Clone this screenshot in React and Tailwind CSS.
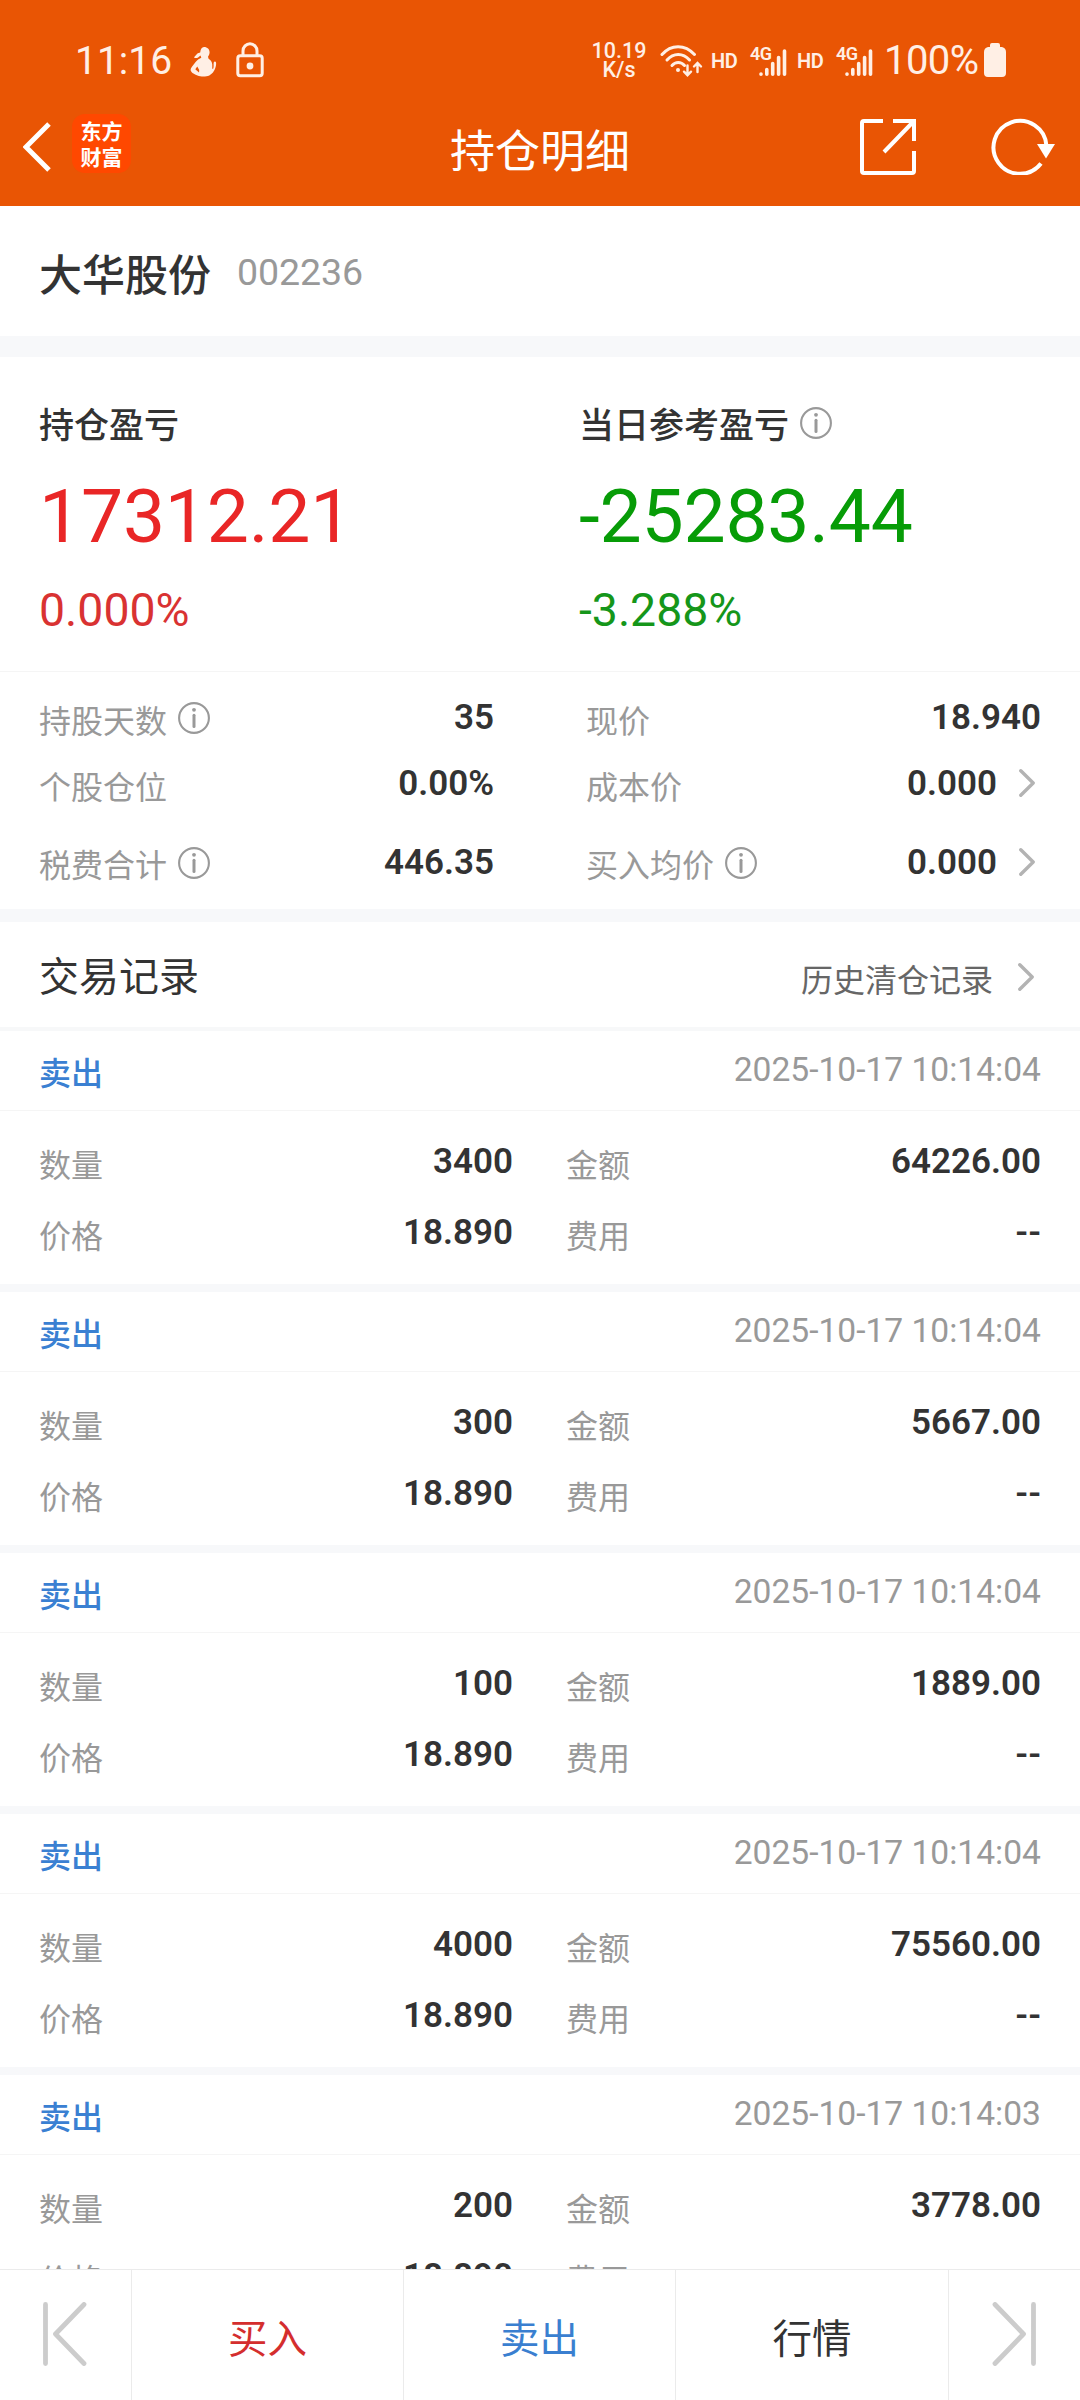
import React from "react";

const trades = [
  { id: 1, time: "2025-10-17 10:14:04", qty: "3400", price: "18.890", amount: "64226.00", fee: "--" },
  { id: 2, time: "2025-10-17 10:14:04", qty: "300", price: "18.890", amount: "5667.00", fee: "--" },
  { id: 3, time: "2025-10-17 10:14:04", qty: "100", price: "18.890", amount: "1889.00", fee: "--" },
  { id: 4, time: "2025-10-17 10:14:04", qty: "4000", price: "18.890", amount: "75560.00", fee: "--" },
  { id: 5, time: "2025-10-17 10:14:03", qty: "200", price: "18.890", amount: "3778.00", fee: "--" },
];

function InfoIcon({ className = "" }) {
  return (
    <svg width="32" height="32" viewBox="0 0 32 32" fill="none" className={className}>
      <circle cx="16" cy="16" r="14.9" stroke="#999" strokeWidth="2.1" />
      <circle cx="16" cy="7.8" r="1.9" fill="#999" />
      <path d="M16 13.2V24.6" stroke="#999" strokeWidth="3" strokeLinecap="round" />
    </svg>
  );
}

function Chevron({ className = "" }) {
  return (
    <svg width="16" height="28" viewBox="0 0 16 28" fill="none" className={className}>
      <path d="M1.8 1.8L14.2 14L1.8 26.2" stroke="#b3b3b3" strokeWidth="3.4" strokeLinecap="round" strokeLinejoin="round" />
    </svg>
  );
}

function Signal() {
  return (
    <div className="relative h-[34px] w-[37px]">
      <span className="absolute left-0 top-[2px] text-[18px] font-semibold leading-[18px] tracking-[-0.5px]">4G</span>
      <svg width="37" height="34" viewBox="0 0 37 34" className="absolute left-0 top-0" stroke="currentColor" strokeWidth="3.6" strokeLinecap="round">
        <path d="M11 31V31.2M16.8 26.5V31.2M22.7 20.5V31.2M28.6 14.5V31.2M34.5 8V31.2" />
      </svg>
    </div>
  );
}

function StatusBar() {
  return (
    <div className="flex h-[120px] items-center pl-[75px] pr-[74px] text-[#ffefe5]">
      <span className="w-[115px] pt-[2px] text-[39px] leading-[40px]">11:16</span>

      {/* Notification icons */}
      <svg width="27" height="31" viewBox="0 0 27 31" fill="currentColor" className="mt-[3px]">
        <path d="M14 1c3.400 0 5.600 2.300 5.600 5.300 0 1.800-.8 3.400-1.600 4.500l.6 2c3 1.700 4 4.500 3.700 7.800-.1 1.500 0 2.500.5 2.400.8-.2.900-2.600.8-4.700-.1-1.500.3-2.700 1.300-2.700 1.200 0 1.500 1.600 1.100 3.700-.7 4-2.700 8.200-6.700 10.200-3.500 1.500-8.600 1.400-11.800 0-3.100-1.300-6.900-3-6.900-5.700 0-1.700 2.500-4.500 4.800-7.500 1.200-1.500 2.400-3 4.500-3.900l1.400-.6-.8-2.400c-1.200 1-2.600 2.600-5 2.700-1.200 0-1.800-.7-.8-1.700 1-.9 1.800-1.600 2.500-2.600.7-.9 2-1 3-1.400C10.500 3.200 11.800 1 14 1Z" />
        <path d="M7.300 20.500L5.300 23.300L9 26.500L9.200 24Z" fill="#e95504" />
      </svg>
      <svg width="28" height="36" viewBox="0 0 28 36" fill="none" className="ml-[19px]">
        <rect x="1.800" y="13.800" width="24.400" height="20" rx="2.500" stroke="currentColor" strokeWidth="3" />
        <path d="M7 13.500V9A7 7.200 0 0 1 21 9V13.500" stroke="currentColor" strokeWidth="3" />
        <circle cx="14" cy="24" r="3.400" fill="currentColor" />
      </svg>

      <div className="ml-auto flex items-center">
        <div className="w-[56px] text-center text-[21.500px] font-medium leading-[19px]">
          <p>10.19</p>
          <p>K/s</p>
        </div>
        <svg width="43" height="34" viewBox="0 0 43 34" fill="none" stroke="currentColor" strokeWidth="3" strokeLinecap="round" className="ml-[13px]">
          <path d="M2 11.500C11 1 25 1 34.500 11.500" />
          <path d="M7 17C13.500 9.500 23 9.500 29.500 17" />
          <path d="M12 22.500C15.500 18.500 21 18.500 24.500 22.500" />
          <circle cx="18" cy="27" r="2" fill="currentColor" stroke="none" />
          <path d="M27.500 22.500V32M24 28.700L27.500 32.200L31 28.700" strokeWidth="2.400" />
          <path d="M37.500 29V20.500M34 23.500L37.500 20L41 23.500" strokeWidth="2.400" />
        </svg>
        <span className="ml-[8px] w-[27px] pt-px text-[20px] font-semibold leading-[20px] tracking-[-0.5px]">HD</span>
        <div className="ml-[12px]"><Signal /></div>
        <span className="ml-[10px] w-[27px] pt-px text-[20px] font-semibold leading-[20px] tracking-[-0.5px]">HD</span>
        <div className="ml-[12px]"><Signal /></div>
        <span className="ml-[11px] w-[99px] pt-[2px] text-[40px] leading-[40px] tracking-[-0.6px]">100%</span>
        <svg width="22" height="34" viewBox="0 0 22 34" fill="currentColor" className="ml-[1px]">
          <path d="M8 0H14Q16 0 16 2V4H18Q22 5 22 9V30Q22 34 18 34H4Q0 34 0 30V9Q0 5 4 4H6V2Q6 0 8 0Z" />
        </svg>
      </div>
    </div>
  );
}

function NavBar() {
  return (
    <div className="grid h-[86px] grid-cols-[1fr_auto_1fr] items-start text-white">
      <div className="flex items-center pl-[23px]">
        <svg width="28" height="50" viewBox="0 0 28 50" fill="none">
          <path d="M26 2L3 25L26 48" stroke="currentColor" strokeWidth="5" />
        </svg>
        <div className="-mt-[6px] ml-[21px] flex h-[59px] w-[59px] flex-col items-center justify-center rounded-[13px] bg-[#ff4800] pb-px font-['Noto_Sans_CJK_SC',sans-serif] text-[21px] font-bold leading-[26px]">
          <span>东方</span>
          <span>财富</span>
        </div>
      </div>
      <h1 className="pt-[8px] text-[45px] leading-[50px]">持仓明细</h1>
      <div className="flex justify-end pr-[25px]">
        <svg width="58" height="58" viewBox="0 0 58 58" fill="none" stroke="currentColor" strokeWidth="4" className="-mt-[2px]">
          <path d="M24 3H5Q3 3 3 5V53Q3 55 5 55H53Q55 55 55 53V33" />
          <path d="M34 3H55V23M55 3L25 34" />
        </svg>
        <svg width="64" height="58" viewBox="0 0 64 58" fill="none" className="-mt-[3px] ml-[74px]">
          <path d="M50 46.500A26.500 26.500 0 1 1 55.500 29" stroke="currentColor" strokeWidth="4" />
          <path d="M46 27H64L55 41.500Z" fill="currentColor" />
        </svg>
      </div>
    </div>
  );
}

function Stat({ label, value, info, arrow, tall }) {
  return (
    <div className={`flex items-center ${tall ? "h-[91px]" : "h-[66px]"}`}>
      <span className="pt-[9px] text-[32px] leading-[36px] text-[#999]">{label}</span>
      {info && <InfoIcon className="ml-[11px] mt-[2px]" />}
      <span className="ml-auto pt-[2px] text-[35px] font-semibold leading-[40px] text-[#333]">{value}</span>
      {arrow && <Chevron className="ml-[22px] mr-[6px]" />}
    </div>
  );
}

function Field({ label, value }) {
  return (
    <div className="flex h-[71px] items-center justify-between">
      <span className="pt-[9px] text-[32px] leading-[36px] text-[#999]">{label}</span>
      <span className="pt-px text-[35px] font-semibold leading-[40px] text-[#333]">{value}</span>
    </div>
  );
}

function Trade({ trade }) {
  return (
    <div className="h-[261px] shrink-0 border-b-8 border-[#f7f8fa]">
      <div className="flex h-20 items-center justify-between border-b border-[#f5f5f5] pl-[39px] pr-[39px]">
        <span className="pt-[6px] text-[32px] font-medium leading-[36px] text-[#3a80d2]">卖出</span>
        <span className="pb-[1px] text-[33.600px] leading-[36px] text-[#999]">{trade.time}</span>
      </div>
      <div className="grid grid-cols-[474px_475px] gap-x-[53px] pl-[39px] pt-[15px]">
        <Field label="数量" value={trade.qty} />
        <Field label="金额" value={trade.amount} />
        <Field label="价格" value={trade.price} />
        <Field label="费用" value={trade.fee} />
      </div>
    </div>
  );
}

export default function App() {
  return (
    <div className="flex h-[2400px] w-[1080px] flex-col overflow-hidden bg-white font-[Roboto,'Noto_Sans_CJK_SC',sans-serif] text-[#333]">
      <header className="h-[206px] shrink-0 bg-[#e95504]">
        <StatusBar />
        <NavBar />
      </header>

      <main className="flex min-h-0 flex-1 flex-col overflow-hidden">
        {/* Stock */}
        <div className="flex h-[130px] shrink-0 items-center pl-[39px]">
          <span className="pt-[9px] text-[43px] font-medium leading-[50px]">大华股份</span>
          <span className="ml-[26px] pt-[1px] text-[37.500px] leading-[44px] tracking-[-0.1px] text-[#999]">002236</span>
        </div>
        <div className="h-[21px] shrink-0 bg-[#f7f8fa]" />

        {/* Profit and loss */}
        <section className="grid h-[315px] shrink-0 grid-cols-[540px_1fr] border-b border-[#f5f5f5] pl-[39px] pt-[47px]">
          <div>
            <p className="h-11 text-[35px] font-medium leading-[46px]">持仓盈亏</p>
            <p className="mt-[28px] text-[75px] leading-[80px] tracking-[-0.2px] text-[#e92626]">17312.21</p>
            <p className="mt-[29px] text-[46.400px] leading-[50px] text-[#d93232]">0.000%</p>
          </div>
          <div>
            <div className="flex h-11 text-[35px] font-medium leading-[46px]">
              当日参考盈亏
              <InfoIcon className="ml-[11px] mt-[3px]" />
            </div>
            <p className="mt-[28px] text-[75px] leading-[80px] tracking-[-0.2px] text-[#079c07]">-25283.44</p>
            <p className="mt-[29px] text-[46.400px] leading-[50px] text-[#15961a]">-3.288%</p>
          </div>
        </section>

        {/* Position details */}
        <section className="grid h-[237px] shrink-0 grid-cols-[455px_455px] content-start gap-x-[92px] pl-[39px] pt-3">
          <Stat label="持股天数" value="35" info />
          <Stat label="现价" value="18.940" />
          <Stat label="个股仓位" value="0.00%" />
          <Stat label="成本价" value="0.000" arrow />
          <Stat label="税费合计" value="446.35" info tall />
          <Stat label="买入均价" value="0.000" info arrow tall />
        </section>
        <div className="h-[13px] shrink-0 bg-[#f7f8fa]" />

        {/* Trade records */}
        <div className="flex h-[109px] shrink-0 items-center border-b-4 border-[#f7f8f9] pl-[39px] pr-[46px]">
          <h2 className="pt-[6px] text-[40px] leading-[46px]">交易记录</h2>
          <span className="ml-auto pt-[12px] text-[32px] leading-[36px] text-[#666]">历史清仓记录</span>
          <Chevron className="ml-[25px] mt-[5px]" />
        </div>
        {trades.map((trade) => (
          <Trade key={trade.id} trade={trade} />
        ))}
      </main>

      {/* Bottom actions */}
      <footer className="grid h-[131px] shrink-0 grid-cols-[132px_272px_272px_273px_131px] border-t border-[#ebebeb] text-[39.500px]">
        <button className="flex items-start border-r border-[#ebebeb] pl-[43px] pt-8">
          <svg width="44" height="64" viewBox="0 0 44 64" fill="none" stroke="#ccc" strokeWidth="4.800" strokeLinecap="round" strokeLinejoin="round">
            <path d="M2.500 2.500V61.500M41 2.500L12.500 32L41 61.500" />
          </svg>
        </button>
        <button className="border-r border-[#ebebeb] pt-[9px] text-[#d42e2e]">买入</button>
        <button className="border-r border-[#ebebeb] pt-[9px] text-[#3a7fd0]">卖出</button>
        <button className="border-r border-[#ebebeb] pt-[9px]">行情</button>
        <button className="flex items-start pl-[43px] pt-8">
          <svg width="44" height="64" viewBox="0 0 44 64" fill="none" stroke="#ccc" strokeWidth="4.800" strokeLinecap="round" strokeLinejoin="round">
            <path d="M41.500 2.500V61.500M3 2.500L31.500 32L3 61.500" />
          </svg>
        </button>
      </footer>
    </div>
  );
}
